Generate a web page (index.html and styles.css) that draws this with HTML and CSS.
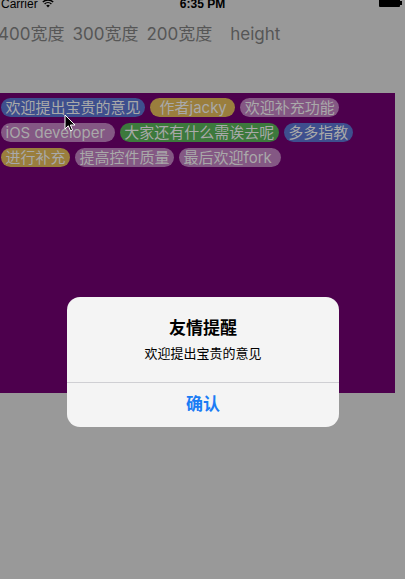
FILE: index.html
```html
<!DOCTYPE html>
<html lang="zh">
<head>
<meta charset="utf-8">
<link rel="stylesheet" href="styles.css">
</head>
<body>
<div class="status">
  <div class="carrier">Carrier
    <svg class="wifi" width="12" height="9" viewBox="0 0 12 9"><path d="M6 8.5 L4.2 6.6 A2.6 2.6 0 0 1 7.8 6.6 Z" fill="#000"/><path d="M2.6 5 A4.9 4.9 0 0 1 9.4 5" stroke="#000" stroke-width="1.4" fill="none"/><path d="M0.8 3.1 A7.4 7.4 0 0 1 11.2 3.1" stroke="#000" stroke-width="1.4" fill="none"/></svg>
  </div>
  <div class="time">6:35 PM</div>
  <div class="battery"><span class="cell"></span><span class="nub"></span></div>
</div>
<div class="header">
  <span>400宽度</span><span>300宽度</span><span>200宽度</span><span class="h">height</span>
</div>
<div class="board">
  <span class="tag blue">欢迎提出宝贵的意见</span>
  <span class="tag gold wide">作者jacky</span>
  <span class="tag mauve">欢迎补充功能</span>
  <span class="tag mauve latin">iOS developer</span>
  <span class="tag green">大家还有什么需诶去呢</span>
  <span class="tag blue">多多指教</span>
  <span class="tag gold">进行补充</span>
  <span class="tag mauve">提高控件质量</span>
  <span class="tag mauve latin">最后欢迎fork</span>
</div>
<svg class="cursor" width="12" height="18" viewBox="0 0 12 18"><path d="M1 1 L1 15 L4.3 11.8 L6.6 17 L8.6 16.1 L6.4 11 L11 11 Z" fill="#000" stroke="#fff" stroke-width="1"/></svg>
<div class="overlay">
  <div class="alert">
    <div class="alert-body">
      <div class="alert-title">友情提醒</div>
      <div class="alert-msg">欢迎提出宝贵的意见</div>
    </div>
    <div class="alert-btn">确认</div>
  </div>
</div>
</body>
</html>
```
FILE: styles.css
```css
html, body {
  margin: 0;
  padding: 0;
  background: #999999;
}
body {
  width: 405px;
  height: 579px;
  overflow: hidden;
  position: relative;
  font-family: "Liberation Sans", "Noto Sans CJK SC", sans-serif;
}
.status {
  display: flex;
  justify-content: space-between;
  align-items: flex-start;
  height: 12px;
  font-size: 12px;
  line-height: 12px;
  color: #000;
  margin-top: -2px;
}
.carrier {
  display: flex;
  align-items: flex-start;
  gap: 4px;
  padding-left: 1px;
  width: 120px;
}
.wifi {
  margin-top: 1px;
}
.time {
  font-weight: bold;
  padding-left: 2px;
}
.battery {
  width: 120px;
  display: flex;
  justify-content: flex-end;
  align-items: flex-start;
  padding-right: 3px;
}
.cell {
  display: block;
  width: 21px;
  height: 9px;
  background: #000;
  border-radius: 1px;
}
.nub {
  display: block;
  width: 1.5px;
  height: 4px;
  background: #000;
  margin-top: 3px;
}
.header {
  display: flex;
  gap: 8px;
  margin-top: 14px;
  margin-left: -2px;
  font-family: "Inter", "Noto Sans CJK SC", sans-serif;
  font-size: 17px;
  line-height: 20px;
  height: 20px;
  color: #565656;
}
.header .h {
  margin-left: 10px;
}
.board {
  margin-top: 49px;
  width: 395px;
  height: 300px;
  box-sizing: border-box;
  background: #4d004d;
  display: flex;
  flex-wrap: wrap;
  align-content: flex-start;
  gap: 6px 5px;
  padding: 5px 1px;
}
.tag {
  display: block;
  height: 19px;
  line-height: 19px;
  padding: 0 4.5px;
  border-radius: 10px;
  font-family: "Inter", "Noto Sans CJK SC", sans-serif;
  font-size: 15px;
  color: #a9a9a9;
  white-space: nowrap;
}
.tag.wide {
  padding: 0 8.5px 0 9.5px;
}
.tag.latin {
  padding-right: 9.5px;
}
.blue { background: #3e4f8e; }
.gold { background: #9a7e3d; }
.mauve { background: #845884; }
.green { background: #3c793c; }
.cursor {
  position: absolute;
  left: 64px;
  top: 114px;
}
.overlay {
  position: absolute;
  left: 0;
  top: 0;
  width: 405px;
  height: 579px;
  display: flex;
  justify-content: center;
  align-items: flex-start;
  padding-top: 297px;
  box-sizing: border-box;
}
.alert {
  width: 272px;
  background: #f4f4f4;
  border-radius: 13px;
  overflow: hidden;
  margin-left: 1px;
}
.alert-body {
  padding: 21px 16px 20px;
  text-align: center;
  border-bottom: 1px solid #cfcfd3;
  color: #000;
}
.alert-title {
  font-size: 17px;
  line-height: 22px;
  font-weight: bold;
}
.alert-msg {
  font-size: 13px;
  line-height: 16px;
  margin-top: 6px;
}
.alert-btn {
  height: 44px;
  line-height: 44px;
  text-align: center;
  font-size: 17px;
  font-weight: bold;
  color: #1b7cf4;
}
```
